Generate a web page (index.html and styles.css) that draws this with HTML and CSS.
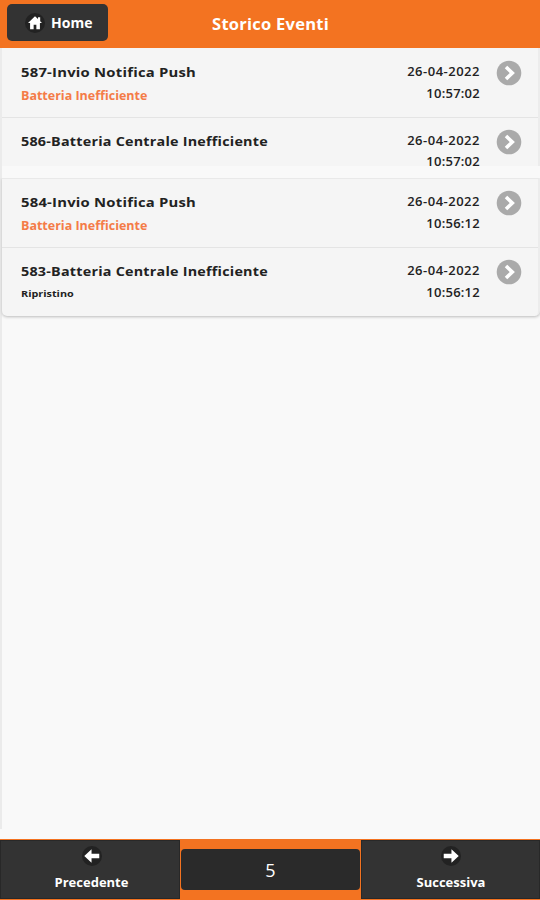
FILE: index.html
```
<!DOCTYPE html>
<html lang="it">
<head>
<meta charset="utf-8">
<title>Storico Eventi</title>
<link rel="stylesheet" href="styles.css">
</head>
<body>
<header class="header">
  <a class="home"><svg class="icon" viewBox="0 0 22 22"><circle cx="11" cy="11" r="11"/><path d="M11 3.5 3.3 11H5.6V18H9.5V13H12.5V18H16.4V11H18.7L16.7 9V4.8H14.3V6.7Z"/></svg><span>Home</span></a>
  <h1>Storico Eventi</h1>
</header>
<main class="content">
  <ul class="list">
    <li class="row">
      <div class="event"><h2 class="push">587-Invio Notifica Push</h2><p class="alert">Batteria Inefficiente</p></div>
      <div class="time"><span>26-04-2022</span><span class="clock">10:57:02</span></div>
      <svg class="go" viewBox="0 0 26 26"><circle cx="13" cy="13" r="12.3"/><path d="m10 7 6.3 6L10 19"/></svg>
    </li>
    <li class="row cut">
      <div class="event"><h2>586-Batteria Centrale Inefficiente</h2></div>
      <div class="time"><span>26-04-2022</span><span class="clock">10:57:02</span></div>
      <svg class="go" viewBox="0 0 26 26"><circle cx="13" cy="13" r="12.3"/><path d="m10 7 6.3 6L10 19"/></svg>
    </li>
  </ul>
  <ul class="list last">
    <li class="row">
      <div class="event"><h2 class="push">584-Invio Notifica Push</h2><p class="alert">Batteria Inefficiente</p></div>
      <div class="time"><span>26-04-2022</span><span class="clock">10:56:12</span></div>
      <svg class="go" viewBox="0 0 26 26"><circle cx="13" cy="13" r="12.3"/><path d="m10 7 6.3 6L10 19"/></svg>
    </li>
    <li class="row">
      <div class="event"><h2>583-Batteria Centrale Inefficiente</h2><p class="note">Ripristino</p></div>
      <div class="time"><span>26-04-2022</span><span class="clock">10:56:12</span></div>
      <svg class="go" viewBox="0 0 26 26"><circle cx="13" cy="13" r="12.3"/><path d="m10 7 6.3 6L10 19"/></svg>
    </li>
  </ul>
</main>
<footer class="footer">
  <a class="nav"><svg class="icon" viewBox="0 0 22 22"><circle cx="11" cy="11" r="11"/><path d="M2.5 11 10.5 3.5V8.5H19V13.5H10.5V18.5Z"/></svg><span>Precedente</span></a>
  <div class="page">5</div>
  <a class="nav next"><svg class="icon" viewBox="0 0 22 22"><circle cx="11" cy="11" r="11"/><path d="M19.5 11 11.5 3.5V8.5H3V13.5H11.5V18.5Z"/></svg><span>Successiva</span></a>
</footer>
</body>
</html>
```
FILE: styles.css
```
* { box-sizing: border-box; margin: 0; padding: 0; }
body {
  width: 540px; height: 900px; overflow: hidden;
  display: flex; flex-direction: column;
  background: #f9f9f9; color: #222;
  font-family: "Open Sans", "Noto Sans", sans-serif; font-weight: 700;
}
.header {
  height: 48px; flex: none; background: #f37321; color: #fff;
  display: grid; grid-template-columns: 101px 1fr 107px; padding: 4px 0 0 7px;
}
.home {
  width: 101px; height: 37px; border-radius: 5px; background: #333;
  display: flex; align-items: center; gap: 6px; padding-left: 18px;
  font-size: 14px;
}
.home span { line-height: 36px; }
.icon { width: 20px; height: 20px; fill: #fff; flex: none; }
.icon circle { fill: #222; }
h1 { font-size: 16.5px; line-height: 40px; letter-spacing: .25px; text-align: center; white-space: nowrap; }
.content { flex: 1; position: relative; }
.content::before {
  content: ""; position: absolute; left: 0; top: 0; width: 2px; height: 781px; background: #ebebeb;
}
.list { list-style: none; margin-left: 2px; background: #f5f5f5; border-right: 2px solid #ececec; }
.last {
  margin-top: 12px; border-top: 1px solid #e9e9e9;
  border-radius: 0 0 5px 5px; box-shadow: 0 1px 3px #bbb; clip-path: inset(0 -2px -6px -2px);
}
.row { display: flex; height: 69px; padding: 12px 16px 0 19px; }
.row + .row { border-top: 1px solid #e4e4e4; padding-top: 11px; }
.last .row { height: 68px; padding-top: 11px; }
.last .row + .row { height: 69px; }
.row.cut { height: 49px; }
.event { flex: 1; white-space: nowrap; }
h2 { font-size: 13px; line-height: 24px; letter-spacing: .2px; transform: scaleX(1.104); transform-origin: left; }
h2.push { transform: scaleX(1.14); }
.alert { font-size: 12.5px; line-height: 23px; color: #f47c48; }
.note { font-size: 9.5px; line-height: 22px; transform: scaleX(1.14); transform-origin: left; }
.time {
  display: flex; flex-direction: column; text-align: right; width: 90px; margin-right: 16px;
  font-size: 13px; line-height: 22px; font-weight: 600; letter-spacing: .5px;
}
.clock { letter-spacing: .25px; }
.cut .time { line-height: 21px; padding-top: 1px; }
.go { width: 26px; height: 26px; flex: none; fill: #aaa; }
.go path { fill: none; stroke: #fff; stroke-width: 3.6; }
.footer {
  height: 61px; flex: none; background: #f37321; color: #fff;
  display: grid; grid-template-columns: 180px 181px 179px; padding: 1px 0;
}
.nav {
  background: #333; border: 1px solid #282828;
  display: flex; flex-direction: column; align-items: center; padding: 5px 0 0 3px;
  font-size: 13px; line-height: 32px;
}
.nav.next { padding-left: 1px; }
.page {
  margin: 9px 1px 0; height: 41px; border-radius: 4px; background: #2a2a2a;
  text-align: center; font-size: 18px; line-height: 43px; font-weight: 400;
}
```
